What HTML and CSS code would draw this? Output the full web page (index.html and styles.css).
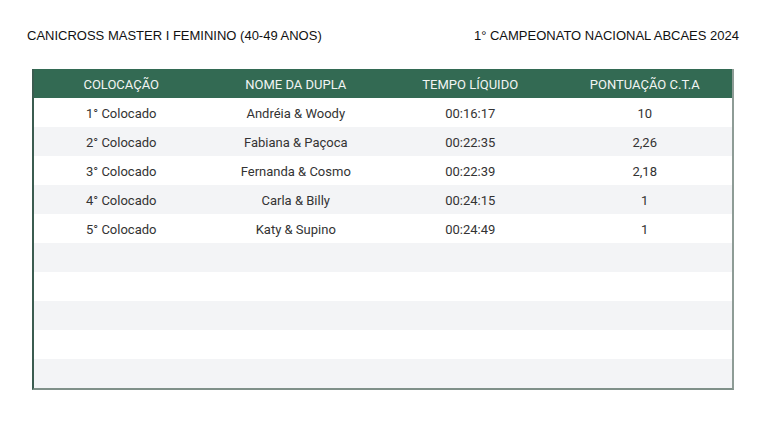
FILE: index.html
```html
<!DOCTYPE html>
<html lang="pt">
<head>
<meta charset="utf-8">
<link rel="stylesheet" href="styles.css">
</head>
<body>
<div class="page">
  <div class="titles">
    <span>CANICROSS MASTER I FEMININO (40-49 ANOS)</span>
    <span>1° CAMPEONATO NACIONAL ABCAES 2024</span>
  </div>
  <div class="table">
    <div class="row head"><div>COLOCAÇÃO</div><div>NOME DA DUPLA</div><div>TEMPO LÍQUIDO</div><div>PONTUAÇÃO C.T.A</div></div>
    <div class="row"><div>1° Colocado</div><div>Andréia &amp; Woody</div><div>00:16:17</div><div>10</div></div>
    <div class="row"><div>2° Colocado</div><div>Fabiana &amp; Paçoca</div><div>00:22:35</div><div>2,26</div></div>
    <div class="row"><div>3° Colocado</div><div>Fernanda &amp; Cosmo</div><div>00:22:39</div><div>2,18</div></div>
    <div class="row"><div>4° Colocado</div><div>Carla &amp; Billy</div><div>00:24:15</div><div>1</div></div>
    <div class="row"><div>5° Colocado</div><div>Katy &amp; Supino</div><div>00:24:49</div><div>1</div></div>
    <div class="row"><div></div><div></div><div></div><div></div></div>
    <div class="row"><div></div><div></div><div></div><div></div></div>
    <div class="row"><div></div><div></div><div></div><div></div></div>
    <div class="row"><div></div><div></div><div></div><div></div></div>
    <div class="row"><div></div><div></div><div></div><div></div></div>
  </div>
</div>
</body>
</html>
```
FILE: styles.css
```css
html, body {
  margin: 0;
  padding: 0;
  background: #ffffff;
}
.page {
  width: 768px;
  height: 431px;
  padding-top: 28px;
  box-sizing: border-box;
}
.titles {
  display: flex;
  justify-content: space-between;
  padding: 0 29px 0 27px;
  font-family: "Liberation Sans", Arial, sans-serif;
  font-size: 13px;
  line-height: 16px;
  color: #111;
}
.table {
  margin: 25px 0 0 32px;
  width: 702px;
  border-left: 2px solid #3b5c50;
  border-right: 2px solid #8e9c96;
  border-bottom: 2px solid #7f9089;
  box-sizing: border-box;
}
.row {
  display: grid;
  grid-template-columns: repeat(4, 1fr);
  height: 29px;
  padding-top: 1px;
  box-sizing: border-box;
  align-items: center;
  text-align: center;
  font-family: Roboto, "Noto Sans", sans-serif;
  font-size: 13px;
  color: #333;
  background: #ffffff;
}
.row:nth-child(odd) {
  background: #f3f4f6;
}
.row.head {
  background: #336a53;
  color: #f2f5f3;
}
```
